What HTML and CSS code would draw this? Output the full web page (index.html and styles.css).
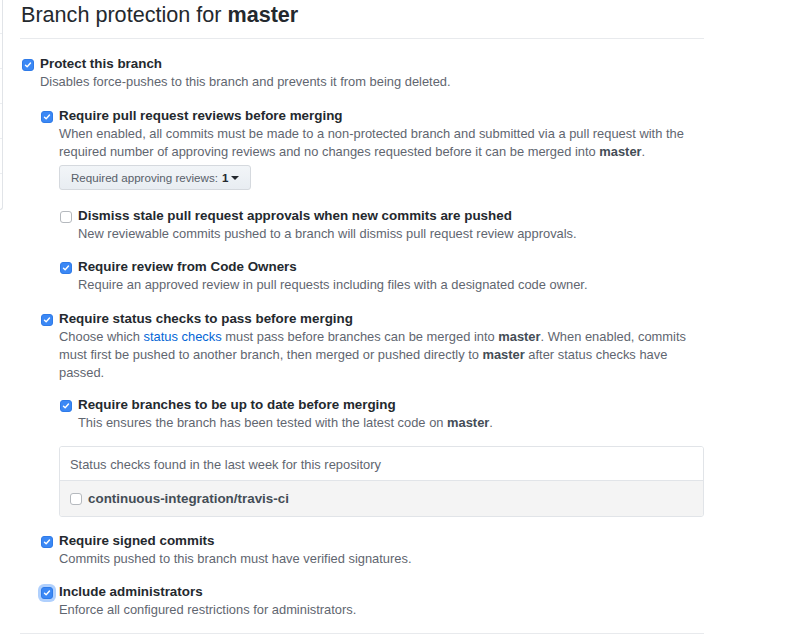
FILE: index.html
```html
<!DOCTYPE html>
<html lang="en">
<head>
<meta charset="utf-8">
<title>Branch protection for master</title>
<link rel="stylesheet" href="styles.css">
</head>
<body>
<div class="page">
  <nav class="sidebar">
    <div class="side-item first"></div>
    <div class="side-item"></div>
    <div class="side-item"></div>
    <div class="side-item"></div>
    <div class="side-item"></div>
    <div class="side-item last"></div>
  </nav>
  <main class="main">
    <h2 class="heading">Branch protection for <strong>master</strong></h2>
    <div class="opts top">
      <div class="opt">
        <span class="cb on"><svg viewBox="0 0 12 12"><path d="M3 6.2l2 2 4-4.6" /></svg></span>
        <div class="body">
          <div class="title">Protect this branch</div>
          <div class="desc">Disables force-pushes to this branch and prevents it from being deleted.</div>
          <div class="sub">
            <div class="opt">
              <span class="cb on"><svg viewBox="0 0 12 12"><path d="M3 6.2l2 2 4-4.6" /></svg></span>
              <div class="body">
                <div class="title">Require pull request reviews before merging</div>
                <div class="desc">When enabled, all commits must be made to a non-protected branch and submitted via a pull request with the required number of approving reviews and no changes requested before it can be merged into <b>master</b>.</div>
                <button class="select">Required approving reviews: <b>1</b><span class="caret"></span></button>
                <div class="sub">
                  <div class="opt gap-lg">
                    <span class="cb"></span>
                    <div class="body">
                      <div class="title">Dismiss stale pull request approvals when new commits are pushed</div>
                      <div class="desc">New reviewable commits pushed to a branch will dismiss pull request review approvals.</div>
                    </div>
                  </div>
                  <div class="opt gap-md">
                    <span class="cb on"><svg viewBox="0 0 12 12"><path d="M3 6.2l2 2 4-4.6" /></svg></span>
                    <div class="body">
                      <div class="title">Require review from Code Owners</div>
                      <div class="desc">Require an approved review in pull requests including files with a designated code owner.</div>
                    </div>
                  </div>
                </div>
              </div>
            </div>
            <div class="opt">
              <span class="cb on"><svg viewBox="0 0 12 12"><path d="M3 6.2l2 2 4-4.6" /></svg></span>
              <div class="body">
                <div class="title">Require status checks to pass before merging</div>
                <div class="desc">Choose which <a href="#">status checks</a> must pass before branches can be merged into <b>master</b>. When enabled, commits must first be pushed to another branch, then merged or pushed directly to <b>master</b> after status checks have passed.</div>
                <div class="sub">
                  <div class="opt gap-sm">
                    <span class="cb on"><svg viewBox="0 0 12 12"><path d="M3 6.2l2 2 4-4.6" /></svg></span>
                    <div class="body">
                      <div class="title">Require branches to be up to date before merging</div>
                      <div class="desc">This ensures the branch has been tested with the latest code on <b>master</b>.</div>
                    </div>
                  </div>
                </div>
                <div class="checks">
                  <div class="checks-head">Status checks found in the last week for this repository</div>
                  <div class="checks-row">
                    <span class="cb"></span>
                    <span class="check-name">continuous-integration/travis-ci</span>
                  </div>
                </div>
              </div>
            </div>
            <div class="opt gap-md">
              <span class="cb on"><svg viewBox="0 0 12 12"><path d="M3 6.2l2 2 4-4.6" /></svg></span>
              <div class="body">
                <div class="title">Require signed commits</div>
                <div class="desc">Commits pushed to this branch must have verified signatures.</div>
              </div>
            </div>
            <div class="opt gap-md">
              <span class="cb on focus"><svg viewBox="0 0 12 12"><path d="M3 6.2l2 2 4-4.6" /></svg></span>
              <div class="body">
                <div class="title">Include administrators</div>
                <div class="desc">Enforce all configured restrictions for administrators.</div>
              </div>
            </div>
          </div>
        </div>
      </div>
    </div>
    <div class="bottom-rule"></div>
  </main>
</div>
</body>
</html>
```

FILE: styles.css
```css
* { box-sizing: border-box; }
html, body { margin: 0; padding: 0; background: #fff; }
body {
  font-family: "Liberation Sans", Arial, sans-serif;
  font-size: 12.9px;
  color: #24292e;
}
.page {
  display: flex;
  align-items: flex-start;
  gap: 17px;
}
.sidebar {
  width: 3px;
  flex: none;
  border-right: 1px solid #e1e4e8;
  border-bottom: 1px solid #e1e4e8;
  border-bottom-right-radius: 3px;
  display: flex;
  flex-direction: column;
}
.side-item {
  height: 35px;
  border-bottom: 1px solid #eceef1;
}
.side-item.first { height: 34px; }
.side-item.last { border-bottom: none; }
.main {
  width: 684px;
  flex: none;
}
.heading {
  margin: 0;
  font-size: 21.6px;
  line-height: 30px;
  font-weight: normal;
  color: #24292e;
  padding: 0 0 8px 1px;
  border-bottom: 1px solid #e8eaed;
}
.heading strong { font-weight: bold; }
.opts.top { margin: 16px 0 0 2px; }
.opt {
  display: flex;
  gap: 6px;
  align-items: flex-start;
}
.sub { padding-left: 1px; }
.sub > .opt { margin-top: 16px; }
.sub > .opt.gap-lg { margin-top: 17px; }
.sub > .opt.gap-md { margin-top: 15px; }
.sub > .opt.gap-sm { margin-top: 14px; }
.body { flex: 1; min-width: 0; }
.title {
  font-weight: bold;
  font-size: 13.4px;
  line-height: 18px;
  color: #24292e;
}
.desc {
  line-height: 18px;
  color: #5f6670;
}
.desc b { color: #444d56; font-weight: bold; }
.desc a { color: #0366d6; text-decoration: none; }
.cb {
  flex: none;
  width: 12px;
  height: 12px;
  margin-top: 4px;
  border-radius: 3px;
  border: 1px solid #b5b9be;
  background: #fff;
  display: flex;
  align-items: center;
  justify-content: center;
}
.cb.on {
  background: #3b88f5;
  border-color: #2f7be8;
}
.cb.focus { box-shadow: 0 0 0 3px rgba(80, 150, 250, 0.45); }
.cb svg { width: 10px; height: 10px; }
.cb path {
  fill: none;
  stroke: #fff;
  stroke-width: 1.7;
  stroke-linecap: round;
  stroke-linejoin: round;
}
.select {
  display: inline-flex;
  align-items: center;
  margin-top: 4px;
  height: 25px;
  width: 192px;
  padding: 0 0 0 11px;
  font-family: inherit;
  font-size: 11.6px;
  color: #586069;
  background: linear-gradient(#f2f5f8, #e8edf2);
  border: 1px solid #d5d9de;
  border-radius: 3px;
}
.select b { color: #24292e; margin-left: 4px; }
.caret {
  display: inline-block;
  margin-left: 3px;
  border-left: 4px solid transparent;
  border-right: 4px solid transparent;
  border-top: 4px solid #24292e;
}
.checks {
  margin-top: 14px;
  border: 1px solid #e1e4e8;
  border-radius: 3px;
  overflow: hidden;
}
.checks-head {
  height: 34px;
  padding: 9px 10px 0;
  line-height: 18px;
  color: #5f6670;
  border-bottom: 1px solid #e1e4e8;
  background: #fff;
}
.checks-row {
  height: 35px;
  background: #f4f4f4;
  display: flex;
  align-items: center;
  gap: 6px;
  padding: 0 10px;
}
.checks-row .cb { margin-top: 0; }
.check-name { font-weight: bold; color: #444d56; font-size: 13.4px; }
.bottom-rule {
  margin-top: 14px;
  border-top: 1px solid #e8eaed;
}
```
